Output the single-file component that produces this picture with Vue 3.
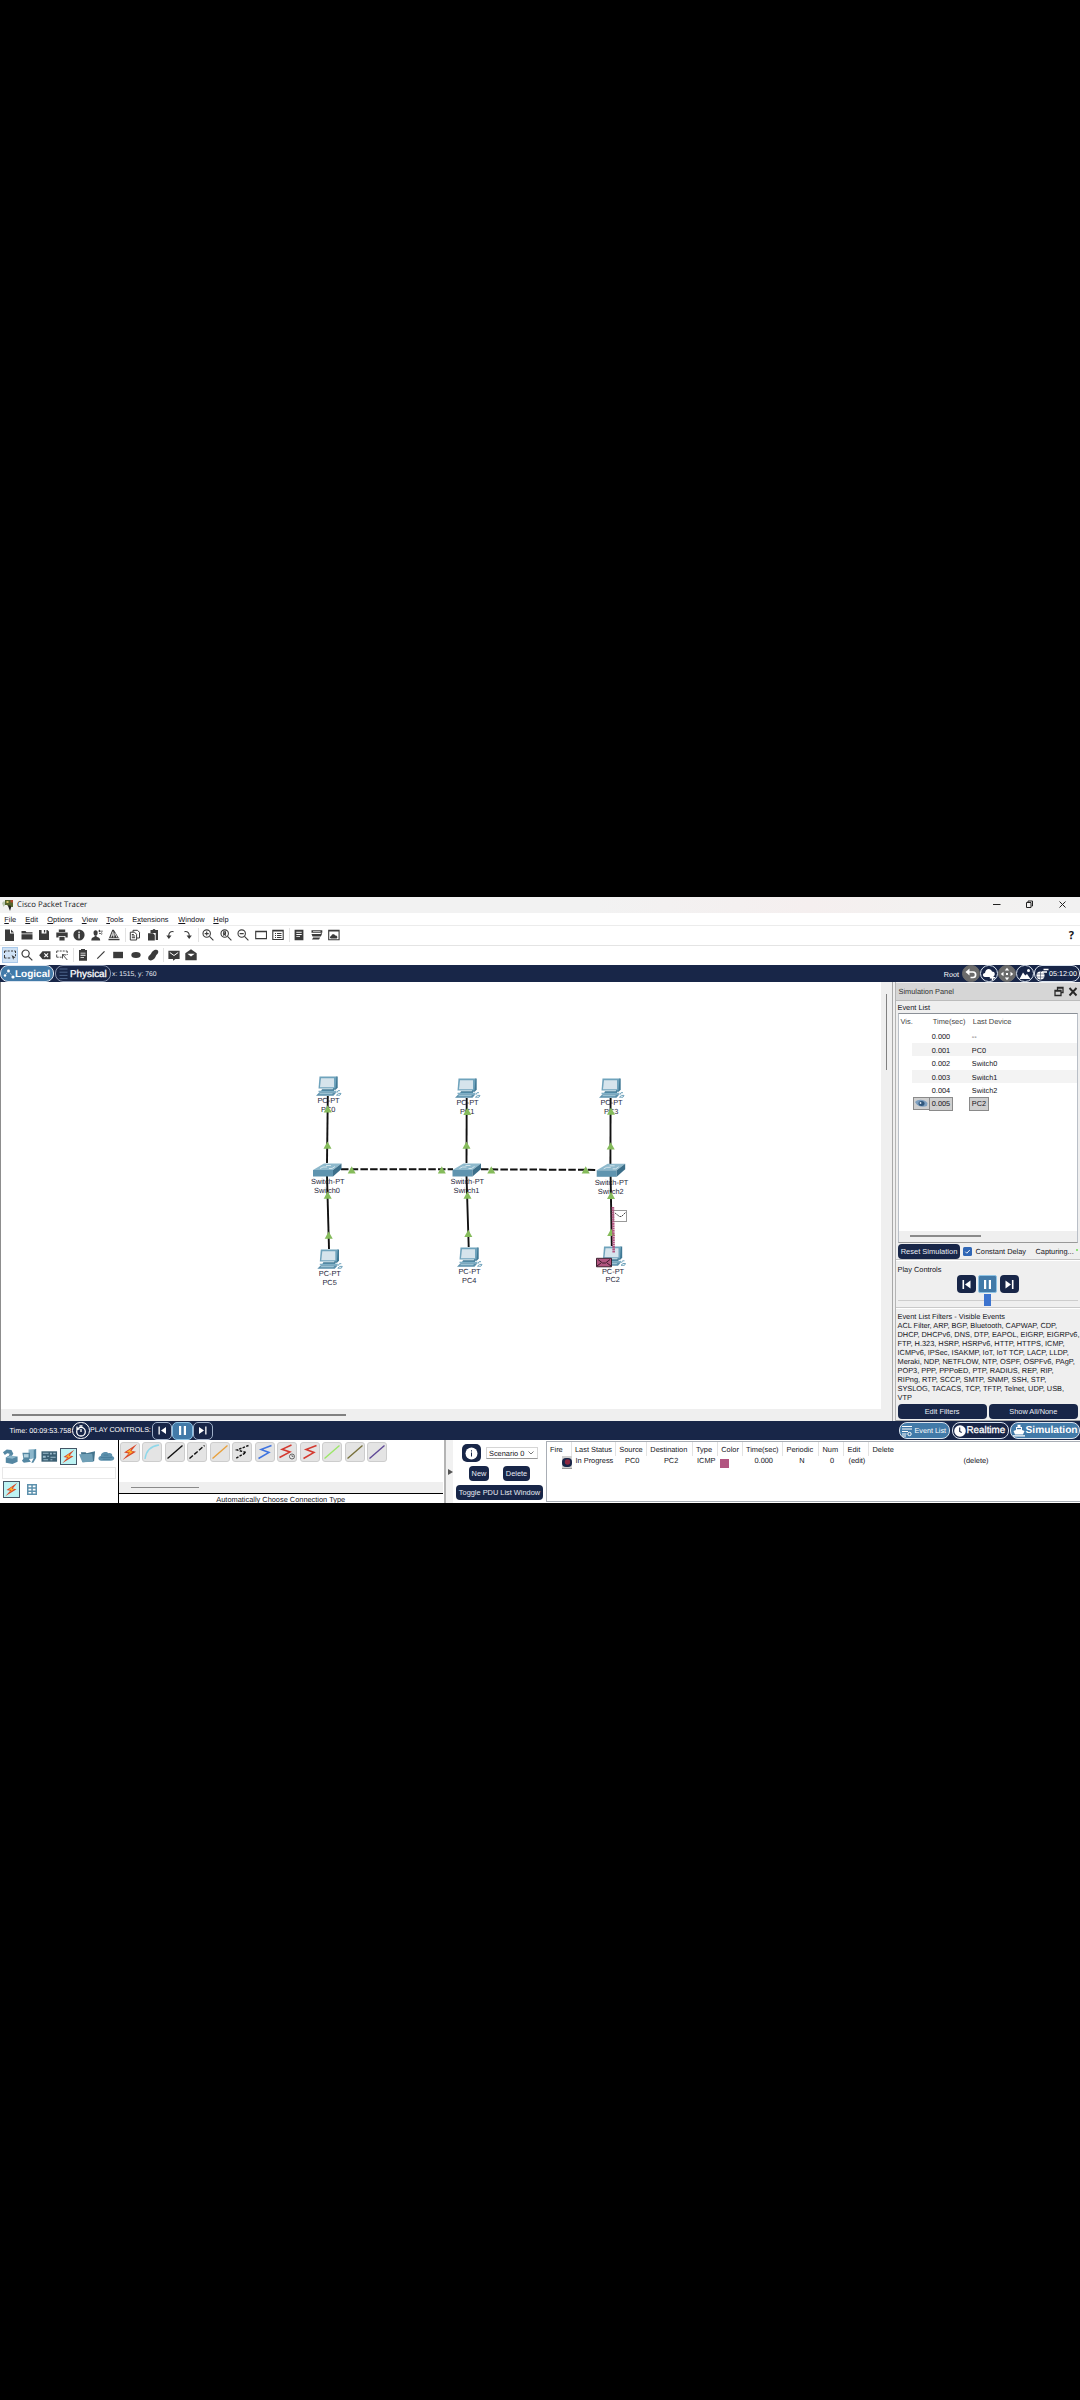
<script setup>
const menus = [
  ['File', 21], ['Edit', 22], ['Options', 34.5], ['View', 24.5], ['Tools', 26],
  ['Extensions', 46], ['Window', 35], ['Help', 30],
]

const icons = {
  file: '<path d="M2 0.5h5v4h4v7.5H2z M8 0.5l3 3H8z"/>',
  folder: '<path d="M0.5 2h4l1 1.3h6V4.6H0.5z M0.5 5.2h11v5.3H0.5z"/>',
  save: '<path fill-rule="evenodd" d="M1 1h8.5L11 2.6V11H1z M3.6 1v3.6h4.8V1H7.2v2.4H5.9V1z"/>',
  print: '<path fill-rule="evenodd" d="M2.8 0.5h6.4v2.4H2.8z M0.3 3.5h11.4v5H9.4V7H2.6v1.5H0.3z M3.4 7.8h5.2v3.7H3.4z"/>',
  info: '<circle cx="6" cy="6" r="5.6"/><path fill="#fff" d="M5.4 2.6h1.3v1.3H5.4z M5.4 4.8h1.3v4.6H5.4z"/>',
  user: '<ellipse cx="4.6" cy="4" rx="2.1" ry="2.700"/><path d="M0.3 11.500c0-2.700 1.500-3 3.300-3.700V6.500h2v1.300c1.800.5 3.600.9 3.600 3.700z M7.500 1.700h4.300v.8H7.500z M8 4h3.800v.8H8z M9 .6v3L7.200 2.100z M10.300 2.900v3l1.600-1.500z"/>',
  pyramid: '<path d="M4.300 0.800h1.500L10.800 9H1z M0.500 9.800h11v1.500H0.500z"/><path fill="none" stroke="#fff" stroke-width=".8" d="M5 2.500L3 8.500 M5.800 3.500v5 M7 4.200l2 4.300 M3.500 6h3"/>',
  copy: '<g fill="none" stroke="#3b3b3b" stroke-width="1"><path d="M4 3V1.300h4.500l2 2V9H8"/><path d="M1.300 3.200h4.200L7.600 5.300V11H1.300z M2.800 5.500h2 M2.800 7h3.300 M2.800 8.700h3.300"/></g>',
  paste: '<path d="M3.500 1h2L6.500 0h1l1 1h2.500v10H8.700V4H3.500z M1 4.200h5l1.800 1.900v5.400H1z"/>',
  undo: '<path fill="none" stroke="#3b3b3b" stroke-width="1.100" d="M9.500 2.600c-3.500-.4-5 1.600-4.700 4.500"/><path d="M2.300 6.400h5.200L4.900 10z"/>',
  redo: '<path fill="none" stroke="#3b3b3b" stroke-width="1.100" d="M2.500 2.600c3.500-.4 5 1.600 4.700 4.500"/><path d="M4.600 6.400h5.200L7.200 10z"/>',
  zin: '<g fill="none" stroke="#3b3b3b" stroke-width="1.100"><circle cx="4.700" cy="4.600" r="3.700"/><path d="M7.500 7.400l3.900 3.900 M2.700 4.600h4 M4.700 2.600v4"/></g>',
  zreset: '<g fill="none" stroke="#3b3b3b" stroke-width="1.100"><circle cx="4.700" cy="4.600" r="3.700"/><path d="M7.500 7.400l3.900 3.900 M3.700 6.800V2.900h1.800v1.800H4L6 6.600"/></g>',
  zout: '<g fill="none" stroke="#3b3b3b" stroke-width="1.100"><circle cx="4.700" cy="4.600" r="3.700"/><path d="M7.500 7.400l3.900 3.900 M2.700 4.600h4"/></g>',
  rect: '<path fill="none" stroke="#3b3b3b" stroke-width="1.100" d="M0.700 2.300h10.800v7.300H0.700z M0.700 2.800h10.800"/>',
  view: '<path fill="none" stroke="#3b3b3b" stroke-width="1.100" d="M0.800 1.300h10.400v9.200H0.800z M0.800 2h10.400 M3 4.500h1 M5 4.500h4.500 M3 6.500h1 M5 6.500h4.500 M3 8.500h1 M5 8.500h4.500"/>',
  doc: '<path fill-rule="evenodd" d="M1.600 0.700h8.800v10.600H1.600z M3.300 2.800v.9h5.400v-.9z M3.300 5v.9h5.400V5z M3.300 7.200v.9H7v-.9z"/>',
  stack: '<path d="M0.500 1.200h10.800v2.600H0.500z M0.500 5h8.800l1.500-1.500v2l-1 2H1.500z M2.200 8.400h7L8 10.600H1z"/><path fill="#fff" d="M2 2h7.500v.6H2z"/>',
  cloudwin: '<path fill="none" stroke="#3b3b3b" stroke-width="1.100" d="M0.700 1.200h10.400v9.600H0.700z M0.700 2h10.400"/><path d="M3 9.600c-1.500-.3-1.500-2.300.2-2.500.3-2.200 3.200-2.400 4-.6 2.500-.2 2.900 2.800.9 3.100z"/>',
  select: '<path fill="none" stroke="#3b3b3b" stroke-width="1" d="M0.500 4V2h2 M3.700 2h2 M7 2h2 M10.200 2h1.300v2 M0.500 6v3h2 M3.700 9h2.500 M11.500 5.200v2"/><path d="M7.600 6l4 2.500-1.700.5-.7 1.800z"/>',
  lasso: '<path fill="none" stroke="#3b3b3b" stroke-width=".9" d="M0.700 4V2h2 M3.700 2h2 M6.700 2h2 M9.700 2h1.500v2 M0.700 5.500v2.700h2 M3.700 8.200h2 M11.200 5v1"/><path fill="none" stroke="#3b3b3b" stroke-width=".9" d="M6.500 5.500l4.800 5.500 M6.500 5.500v4 M6.500 5.500l3.700.5"/>',
  mag: '<g fill="none" stroke="#3b3b3b" stroke-width="1.200"><circle cx="4.600" cy="4.600" r="3.600"/><path d="M7.300 7.300l4 4"/></g>',
  del: '<path d="M3.500 2.200h8v8h-8L0.200 6.200z"/><path fill="none" stroke="#fff" stroke-width="1.100" d="M5.300 4.300l3.800 3.800 M9.100 4.300L5.300 8.100"/>',
  note: '<path fill-rule="evenodd" d="M2 1h2V0h4v1h2v10.700H2z M3.500 3.700v.9h5v-.9z M3.500 5.800v.9h5v-.9z M3.500 7.900v.9H7v-.9z"/>',
  line: '<path fill="none" stroke="#3b3b3b" stroke-width="1.200" d="M2.300 9.600L9.500 2.400"/>',
  frect: '<path d="M1.200 2.800h9.800v6.400H1.200z"/>',
  ellipse: '<ellipse cx="6" cy="6" rx="4.700" ry="2.900"/>',
  blob: '<path d="M7.500 1C10 0 11.800 1.300 11.200 3.500c-.4 1.600-1.500 1.800-2.100 3-.9 2.300-2.300 4.500-5.100 4.900C1.500 11.700.5 9.500 1.500 7.500 2.200 6 3.200 6.200 4 4.700 4.800 3 5.800 1.700 7.500 1z"/>',
  mail: '<path d="M0.400 1.800h11.200v8.200H7.500L5 11.800V10H0.400z"/><path fill="none" stroke="#fff" stroke-width="1" d="M1.800 3.500L6 6.500l4.200-3"/>',
  mailopen: '<path d="M6 0.300l5.700 4v7H0.300v-7z"/><path fill="#fff" d="M2.300 4.700h7.400L6 7.600z"/>',
}
const bar1 = [
  ['file', 'folder', 'save', 'print', 'info', 'user', 'pyramid'],
  ['copy', 'paste', 'undo', 'redo'],
  ['zin', 'zreset', 'zout', 'rect', 'view'],
  ['doc', 'stack', 'cloudwin'],
]
const bar2 = [
  ['select', 'mag', 'del', 'lasso'],
  ['note', 'line', 'frect', 'ellipse', 'blob'],
  ['mail', 'mailopen'],
]

const pcs = [
  { n: 'PC0', x: 316, y: 1075.7 }, { n: 'PC1', x: 455, y: 1077.7 }, { n: 'PC3', x: 599, y: 1077.7 },
  { n: 'PC5', x: 317.3, y: 1248.7 }, { n: 'PC4', x: 457, y: 1246.7 }, { n: 'PC2', x: 600.5, y: 1245.8 },
]
const switches = [
  { n: 'Switch0', x: 313, y: 1163 }, { n: 'Switch1', x: 452.5, y: 1163 }, { n: 'Switch2', x: 596.7, y: 1163.3 },
]
const links = [
  [327.8, 1096, 327, 1163], [327, 1176, 329, 1249], [466.7, 1098, 466.5, 1163],
  [466.5, 1176, 468.7, 1247], [610.6, 1098, 610.4, 1164], [610.6, 1176, 611.8, 1246],
]
const lights = [
  [327.7, 1109], [327.5, 1145.3], [351.7, 1170], [441.8, 1170], [327.7, 1195.3], [328.7, 1235.3],
  [467.3, 1111.5], [466.5, 1145.3], [467.5, 1195.3], [468.3, 1233.5],
  [491.3, 1170], [585.7, 1170], [611, 1111.3], [610.7, 1146], [611, 1195.5], [611.2, 1232.5],
]

const events = [
  ['0.000', '--'], ['0.001', 'PC0'], ['0.002', 'Switch0'],
  ['0.003', 'Switch1'], ['0.004', 'Switch2'], ['0.005', 'PC2'],
]
const filters = [
  'ACL Filter, ARP, BGP, Bluetooth, CAPWAP, CDP,',
  'DHCP, DHCPv6, DNS, DTP, EAPOL, EIGRP, EIGRPv6,',
  'FTP, H.323, HSRP, HSRPv6, HTTP, HTTPS, ICMP,',
  'ICMPv6, IPSec, ISAKMP, IoT, IoT TCP, LACP, LLDP,',
  'Meraki, NDP, NETFLOW, NTP, OSPF, OSPFv6, PAgP,',
  'POP3, PPP, PPPoED, PTP, RADIUS, REP, RIP,',
  'RIPng, RTP, SCCP, SMTP, SNMP, SSH, STP,',
  'SYSLOG, TACACS, TCP, TFTP, Telnet, UDP, USB,',
  'VTP',
]

const bolt = '<path fill="#d9482b" d="M16 1L3 9.500l4.500 1L1.500 17 15 8.800l-4.500-1z"/><path fill="#ffb52e" d="M10.500 5.500L5.500 9l3.500.6L6.500 12.500l5.700-3.800-3-.6z"/>'
const cables = [
  bolt,
  '<path fill="none" stroke="#8fd8ea" stroke-width="1.400" d="M2 16C3 8 8 3 16 2"/>',
  '<path stroke="#111" stroke-width="1.400" d="M1.500 15.500L16.500 2.500"/>',
  '<path stroke="#111" stroke-width="1.400" stroke-dasharray="4.500 1.800" d="M1.500 15.500L16.500 2.500"/>',
  '<path stroke="#e8a03c" stroke-width="1.400" d="M1.500 15.500L16.500 2.500"/>',
  '<path fill="none" stroke="#111" stroke-width="1.400" stroke-dasharray="2.500 1.300" d="M15.500 2.500L4 7l9 2.500L2.500 15.500"/>',
  '<path fill="none" stroke="#3f74e0" stroke-width="1.500" d="M15.500 2.500L5 6.500l8 3L2.500 15.500"/>',
  '<path fill="none" stroke="#d33a30" stroke-width="1.500" d="M13.500 2L4 6.300l8 2.700L1.500 14.500"/><circle cx="14" cy="13.500" r="2.500" fill="#eee" stroke="#444" stroke-width=".8"/><path fill="none" stroke="#444" stroke-width=".7" d="M14 12v1.500h1.500"/>',
  '<path fill="none" stroke="#d33a30" stroke-width="1.500" d="M15.500 2.500L5 6.500l8 3L2.500 15.500"/>',
  '<path stroke="#9be667" stroke-width="1.400" d="M1.500 15.500L16.500 2.500"/>',
  '<path stroke="#77703a" stroke-width="1.400" d="M1.500 15.500L16.500 2.500"/>',
  '<path stroke="#5f4896" stroke-width="1.400" d="M1.500 15.500L16.500 2.500"/>',
]
const categories = [
  '<path fill="#5487a2" d="M1 4.500L5 1.500l5 .5 2 4-2.500 3.500L16.500 9v5.500L11 17l-7-1.500V10l3.500-2 .5-2-2.500-.5-2.500 2z"/><path fill="#8db7cb" d="M4 10l5-2 7 1-5 2.500z"/>',
  '<path fill="#8db7cb" d="M8 1.500l8-.5v9l-6 2-2-2z"/><path fill="#5487a2" d="M1.500 5h8v6l-1 1 2 2.500-7.500 1L1 13.500l1.500-2z M13.500 2.500L16 1v9.500l-3 5h-2l2.500-5z"/><path fill="#b5d2de" d="M3 6.500h5v3.500H3z"/>',
  '<path fill="#3b5f73" d="M.5 3.500h16.500v11H.5z"/><path fill="#9dbccb" d="M2 5h6v1H2z M9.500 5h2v2h-2z M13 5h2.500v1.500H13z M2 8.300h3v2H2z M6.500 8.300h2v1h-2z M10 9.300h5.500v1H10z M2.500 12h5v1h-5z M10 12h2v1h-2z"/>',
  bolt,
  '<path fill="#43748d" d="M2 4.500h5l1 1 9-2-1 10.500-12 1z"/><path fill="#6f9fb6" d="M0 6.500L14 6l1 8.500L3.500 15z"/>',
  '<path fill="#5d91ad" d="M3.500 13.500C-.5 13.500-.5 9 3 8.500 3 4.500 9 3 11 5.500c3.500-.5 4.500 1.500 4 3 3.500 1 2.500 5-1.500 5z"/><path fill="none" stroke="#3f7491" stroke-width=".7" d="M3 10h12 M5 12h8 M6 7.500h5"/>',
]
const cols = [
  ['Fire', 25], ['Last Status', 44.3], ['Source', 31], ['Destination', 45.7], ['Type', 25.3], ['Color', 24.7],
  ['Time(sec)', 40.5], ['Periodic', 36], ['Num', 25], ['Edit', 25], ['Delete', 40],
]
</script>

<template>
  <div class="screen">
    <div class="window">
      <header class="titlebar">
        <svg class="logo" width="12" height="13" viewBox="0 0 12 13"><path fill="#55652c" d="M3 1h8v7H7L5 6H3z" /><path fill="#b8c7b0" d="M0 4l2-2 1 1v3l-1.500 2z" /><path fill="#b0482e" d="M8.500 1h2.500v2.500H8.500z" /><path fill="#d9c56c" d="M4.500 2h2v2h-2z" /><path fill="#222" d="M6 6.500h2.500L9.200 8 8 12 6.800 9z" /></svg>
        <span class="app-name">Cisco Packet Tracer</span>
        <svg width="90" height="16" viewBox="990 897 90 16" fill="none" stroke="#222" stroke-width="1"><path d="M993 904.500h7.500" /><path d="M1026.500 902.500h4.500v5h-4.500z M1028 902v-1h4.500v5H1031.500" /><path d="M1059.500 901.500l6 6 M1065.500 901.500l-6 6" /></svg>
      </header>
      <nav class="menubar">
        <span v-for="m in menus" :key="m[0]" :style="{ width: m[1] + 'px' }"><template v-if="m[0] === 'Extensions'">E<u>x</u>tensions</template><template v-else><u>{{ m[0][0] }}</u>{{ m[0].slice(1) }}</template></span>
      </nav>
      <div class="tools one">
        <div v-for="(g, i) in bar1" :key="i" class="group">
          <span v-for="k in g" :key="k" class="cell"><svg width="12" height="12" viewBox="0 0 12 12" fill="#3b3b3b" v-html="icons[k]"></svg></span>
        </div>
        <b class="help">?</b>
      </div>
      <div class="tools two">
        <div v-for="(g, i) in bar2" :key="i" class="group">
          <span v-for="k in g" :key="k" class="cell" :class="{ on: k === 'select' }"><svg width="12" height="12" viewBox="0 0 12 12" fill="#3b3b3b" v-html="icons[k]"></svg></span>
        </div>
      </div>
      <div class="navbar">
        <div class="pill logical"><svg width="12" height="12" viewBox="0 0 12 12" fill="#fff"><circle cx="2" cy="7.500" r="1.200" /><circle cx="5.500" cy="3" r="1.400" /><circle cx="10" cy="9" r="1.600" /><path fill="none" stroke="#fff" stroke-width=".7" stroke-dasharray="1 1" d="M2 7.500l3.500-4.500L10 9" /></svg>Logical</div>
        <div class="pill physical"><svg width="9" height="12" viewBox="0 0 9 12" fill="none" stroke="#4d658c" stroke-width="1"><path d="M.5 1h8M.5 4.200h8M.5 7.400h8M.5 10.600h8" /></svg>Physical</div>
        <span class="coords">x: 1515, y: 760</span>
        <span class="root">Root</span>
        <div class="rounds">
          <i class="rb grey"><svg width="14" height="14" viewBox="0 0 14 14"><path fill="none" stroke="#fff" stroke-width="1.700" d="M3 5h6c3.500 0 3.500 5.500 0 5.500H6.500" /><path fill="#fff" d="M1.500 5L5.500 1.500v7z" /></svg></i>
          <i class="rb"><svg width="14" height="14" viewBox="0 0 14 14"><path fill="#fff" d="M3 10C0 9.500.5 6 3 6c.5-5 6-5 7-1.500 3 0 3.500 3 2 4.500l-1 1z" /><path stroke="#fff" stroke-width="1.400" d="M10.500 8v5.500M7.800 10.700h5.400" /></svg></i>
          <i class="rb grey"><svg width="14" height="14" viewBox="0 0 14 14" fill="#fff"><path d="M7 .8L9.200 3.500H4.800zM7 13.200l2.200-2.700H4.800zM.8 7l2.700-2.200v4.400zM13.200 7l-2.700-2.200v4.400zM6 6h2v2H6z" /></svg></i>
          <i class="rb"><svg width="14" height="14" viewBox="0 0 14 14" fill="#fff"><path d="M1.500 12L5 5.500l2.300 3L9 7l3.500 5z" /><circle cx="10.500" cy="3.500" r="1.500" /></svg></i>
        </div>
        <div class="pill clock"><svg width="14" height="14" viewBox="0 0 14 14"><circle cx="5.500" cy="8.500" r="4" fill="#fff" /><path fill="none" stroke="#182648" stroke-width=".5" d="M1.500 7h8M1.500 10h8M5.500 4.500v8" /><path stroke="#fff" stroke-width="1.300" d="M8.500 2.500h5M7 5h5" /></svg>05:12:00</div>
      </div>

      <main class="work">
        <section class="canvas">
          <svg class="topology" width="881" height="427" viewBox="0 982 881 427">
            <defs>
              <g id="pc">
                <path fill="#3f7894" d="M20 .8h1.700V12l-2 2h-3z" />
                <path fill="#6fa3bc" d="M3.500 .8h17l-1 12h-17z" />
                <path fill="#d6e4ec" d="M5 2.500h13v9H4z" />
                <path fill="#3f7894" d="M6 13.500h12v2H5z" />
                <path fill="#7eafc6" d="M2.500 15h18v1.500H2.500z" />
                <path fill="#5a8fab" d="M0 20l3.500-3.500h17L17.500 20z" />
                <path fill="#9bc2d3" d="M4 17.300h13l-1 1.200H3z" />
                <path fill="none" stroke="#6fa3bc" stroke-width="1" d="M21 17l1-2h2M20.500 19.500l2-1.800h2.500l-1 1.800z" />
              </g>
              <g id="sw">
                <path fill="#8eb9cc" d="M0 7L11 .5h17.500L20 7z" />
                <path fill="#5f94af" d="M0 7h20v6.500H0z" />
                <path fill="#3c6f8a" d="M20 7l8.500-6.500V6L20 13.500z" />
                <path fill="none" stroke="#e3eff4" stroke-width=".8" d="M7 5.500l3-1.500h4M13 2.500h5M16 5.500h3l3-2" />
              </g>
            </defs>
            <g class="label">
              <template v-for="p in pcs" :key="p.n">
                <text :x="p.x + 12.500" :y="p.y + 27.700">PC-PT</text><text :x="p.x + 12.300" :y="p.y + 36.600">{{ p.n }}</text>
              </template>
              <template v-for="s in switches" :key="s.n">
                <text :x="s.x + 14.800" :y="s.y + 21.400">Switch-PT</text><text :x="s.x + 14" :y="s.y + 30.400">{{ s.n }}</text>
              </template>
            </g>
            <line v-for="(l, i) in links" :key="i" :x1="l[0]" :y1="l[1]" :x2="l[2]" :y2="l[3]" stroke="#111" stroke-width="1.900" />
            <path stroke="#111" stroke-width="2" stroke-dasharray="7.500 2.200" d="M341 1169.300H453M481 1169.300l116 .6" />
            <use v-for="p in pcs" :key="p.n" href="#pc" :x="p.x" :y="p.y" />
            <use v-for="s in switches" :key="s.n" href="#sw" :x="s.x" :y="s.y" />
            <path v-for="(t, i) in lights" :key="i" fill="#85bb5b" :d="`M${t[0] - 4} ${t[1] + 3.5}L${t[0]} ${t[1] - 3.8}L${t[0] + 4} ${t[1] + 3.5}z`" />
            <path fill="#fff" stroke="#333" stroke-width="1" stroke-dasharray="1 1" d="M613.500 1210.500h13v11h-13z" />
            <path fill="none" stroke="#333" stroke-width=".9" stroke-dasharray="2 .8" d="M615 1213l4.500 3.500h2l4.500-4.500" />
            <path stroke="#b25580" stroke-width="2.600" stroke-dasharray="1.800 .5" d="M612.900 1207l.8 46" />
            <path fill="#b25580" stroke="#301522" stroke-width=".9" d="M596.500 1258.300h15v8.500h-15z" />
            <path fill="none" stroke="#301522" stroke-width=".9" d="M598 1259.500l4.500 3.500h3l4.500-3.500M597 1266l4-3M611 1266l-4-3" />
          </svg>
          <div class="vscroll"><i></i></div>
          <div class="hscroll"><i></i></div>
        </section>

        <aside class="sim">
          <div class="sim-head"><span>Simulation Panel</span><svg width="24" height="12" viewBox="0 0 24 12" fill="none" stroke="#2a2a2a"><path stroke-width="1.300" d="M1 4.500h6v5H1zM3.500 4V1.500H9v5H7.500M1 5h6M3.500 2H9" /><path stroke-width="1.900" d="M15.500 2l7 7.500M22.500 2l-7 7.500" /></svg></div>
          <div class="sim-label">Event List</div>
          <div class="events">
            <div class="ev head"><span>Vis.</span><span>Time(sec)</span><span>Last Device</span></div>
            <div v-for="(e, i) in events" :key="i" class="ev" :class="{ alt: i % 2, cur: i === 5 }">
              <span class="eye"><svg v-if="i === 5" width="13" height="9" viewBox="0 0 13 9"><path fill="#7d9fc0" d="M0 3C3 0 9 0 12.500 4l-.5 3C8 8 3 8.500 0 3z" /><ellipse cx="6.500" cy="4.500" rx="3" ry="2.500" fill="#31577c" /><circle cx="5.500" cy="4" r=".9" fill="#dfeaf3" /></svg></span>
              <span><em>{{ e[0] }}</em></span><span><em>{{ e[1] }}</em></span>
            </div>
            <div class="ev-scroll"><i></i></div>
          </div>
          <div class="reset">
            <button class="btn rs">Reset Simulation</button>
            <i class="check"><svg width="9" height="9" viewBox="0 0 9 9"><path fill="none" stroke="#fff" stroke-width=".9" d="M2.300 4.700l1.500 1.500L6.800 3" /></svg></i>
            <span class="cd">Constant Delay</span><span>Capturing...</span><i class="dot"></i>
          </div>
          <div class="play">
            <div>Play Controls</div>
            <div class="pbtns">
              <i><svg width="11" height="11" viewBox="0 0 11 11" fill="#fff"><path d="M1.500 1h1.600v9H1.500zM9.500 1.500v8l-5.500-4z" /></svg></i>
              <i class="act"><svg width="11" height="11" viewBox="0 0 11 11" fill="#fff"><path d="M2 1h2.200v9H2zM6.800 1H9v9H6.800z" /></svg></i>
              <i><svg width="11" height="11" viewBox="0 0 11 11" fill="#fff"><path d="M7.900 1h1.600v9H7.900zM1.500 1.500v8L7 5.500z" /></svg></i>
            </div>
            <div class="slider"><i></i></div>
          </div>
          <div class="filters">
            <div class="ft">Event List Filters - Visible Events</div>
            <div v-for="f in filters" :key="f" class="fl">{{ f }}</div>
            <div class="fb"><button class="btn">Edit Filters</button><button class="btn">Show All/None</button></div>
          </div>
        </aside>
      </main>

      <div class="timebar">
        <span class="time">Time: 00:09:53.758</span>
        <i class="timer"><svg width="12" height="12" viewBox="0 0 12 12" fill="none" stroke="#fff"><circle cx="6" cy="6.700" r="4.300" stroke-width="1.300" /><path stroke-width="1.300" d="M4.500 1h3M6 4v3M2 1.500v2.500h2.500" /></svg></i>
        <span class="pc">PLAY CONTROLS:</span>
        <div class="tb">
          <i><svg width="11" height="11" viewBox="0 0 11 11" fill="#fff"><path d="M1.500 1.500h1.300v8H1.500zM9 2v7L4 5.500z" /></svg></i>
          <i class="act"><svg width="11" height="11" viewBox="0 0 11 11" fill="#fff"><path d="M2 1h2.200v9H2zM6.800 1H9v9H6.800z" /></svg></i>
          <i><svg width="11" height="11" viewBox="0 0 11 11" fill="#fff"><path d="M8.200 1.500h1.300v8H8.200zM2 2v7l5-3.500z" /></svg></i>
        </div>
        <div class="modes">
          <div class="pill evl"><svg width="11" height="12" viewBox="0 0 11 12" fill="none" stroke="#fff" stroke-width="1"><path d="M0 1.500h10M0 4h10M0 6.500h6M0 9h4.500M0 11h4" /><circle cx="7.500" cy="9" r="1.700" /></svg>Event List</div>
          <div class="pill rt"><svg width="12" height="12" viewBox="0 0 12 12"><circle cx="6" cy="6" r="5.800" fill="#fff" /><path fill="none" stroke="#182648" stroke-width="1.100" d="M5.700 2.500v4l2 1" /></svg>Realtime</div>
          <div class="pill sm"><svg width="12" height="13" viewBox="0 0 12 13" fill="#fff"><path d="M3 6V3h1.500V.8h3V3H9v3l2.500 1-1.500 3.500H2L.5 7zM0 11.300h12v1.200H0z" /><path fill="#427aa8" d="M4 4h4v1.200H4z" /></svg>Simulation</div>
        </div>
      </div>

      <footer class="bottom">
        <div class="palette">
          <div class="cats"><svg v-for="(c, i) in categories" :key="i" width="17" height="17" viewBox="0 0 18 18" :class="{ sel: i === 3 }" v-html="c"></svg></div>
          <div class="subtitle"></div>
          <div class="subs"><svg class="sel" width="17" height="17" viewBox="0 0 18 18" v-html="bolt"></svg><svg width="10" height="11" viewBox="0 0 10 11"><path fill="#5d91ad" fill-rule="evenodd" d="M0 0h10v11H0zM1.500 1.500v1.800h2.800V1.500zM5.800 1.500v1.800h2.700V1.500zM1.500 4.700v1.800h2.800V4.700zM5.800 4.700v1.800h2.700V4.700zM1.500 7.900v1.700h2.800V7.900zM5.800 7.900v1.700h2.700V7.900z" /></svg></div>
        </div>
        <div class="conns">
          <div class="cable-row"><i v-for="(c, i) in cables" :key="i"><svg width="18" height="18" viewBox="0 0 18 18" v-html="c"></svg></i></div>
          <div class="cscroll"><i></i></div>
          <div class="cname">Automatically Choose Connection Type</div>
        </div>
        <div class="splitter"><svg width="5" height="6" viewBox="0 0 5 6"><path fill="#555" d="M0 0l5 3-5 3z" /></svg></div>
        <div class="scenario">
          <div class="srow r1"><i class="inf"><svg width="13" height="13" viewBox="0 0 13 13"><circle cx="6.500" cy="6.500" r="6" fill="#fff" /><path fill="#182648" d="M6 3.300h1v1.200H6zM6 5.500h1v4H6z" /></svg></i><div class="combo">Scenario 0<svg width="6" height="4" viewBox="0 0 6 4"><path fill="none" stroke="#555" stroke-width=".8" d="M.5.500L3 3 5.500.500" /></svg></div></div>
          <div class="srow r2"><button class="btn new">New</button><button class="btn dl">Delete</button></div>
          <button class="btn tog">Toggle PDU List Window</button>
        </div>
        <div class="pdu">
          <div class="prow ph"><span v-for="c in cols" :key="c[0]" :style="{ width: c[1] + 'px' }">{{ c[0] }}</span></div>
          <div class="prow pr">
            <span class="fire"><i><svg width="10" height="9" viewBox="0 0 10 9"><rect width="10" height="9" rx="4" fill="#182648" /><circle cx="5.500" cy="4" r="2.700" fill="#8c2740" /></svg></i></span>
            <span class="st">In Progress</span><span class="c31">PC0</span><span class="c46">PC2</span><span class="ty">ICMP</span>
            <span class="co"><i></i></span><span class="c40">0.000</span><span class="c36">N</span><span class="c25">0</span><span class="ed">(edit)</span><span>(delete)</span>
          </div>
        </div>
      </footer>
    </div>
  </div>
</template>

<style>
body { margin: 0; background: #000; }
</style>

<style scoped>
.screen { width: 1080px; height: 2400px; background: #000; padding-top: 897px; box-sizing: border-box; overflow: hidden; }
.screen * { box-sizing: border-box; }
.window { width: 1080px; height: 607px; background: #fff; font-family: "Liberation Sans", Arial, sans-serif; font-size: 7.4px; line-height: 9px; color: #15151c; display: flex; flex-direction: column; text-rendering: geometricPrecision; white-space: nowrap; overflow: hidden; }
svg { display: block; flex: none; }
i { display: block; font-style: normal; flex: none; }
.titlebar { height: 16px; flex: none; background: linear-gradient(90deg, #f2f2f2 0, #f2f2f2 55%, #f5efef 75%, #f3f1f0 85%, #f1f1f1); display: flex; align-items: center; }
.logo { margin-left: 2px; }
.app-name { font-family: "Open Sans", "Noto Sans", sans-serif; font-size: 7.8px; margin: 1px 0 0 3px; flex: 1; }
.menubar { height: 13px; flex: none; padding-left: 4.3px; display: flex; align-items: center; border-bottom: 1px solid #ececec; }
.menubar u { text-underline-offset: 1px; text-decoration-thickness: 1px; }
.tools { height: 20px; flex: none; display: flex; align-items: center; border-bottom: 1px solid #e4e4e4; }
.tools.two { height: 19px; border-bottom: none; padding-bottom: 1.5px; }
.tools.one { padding-left: .5px; padding-bottom: .5px; }
.tools.two { padding-left: 1px; }
.group { display: flex; align-items: center; }
.group + .group { margin-left: 1.5px; border-left: 1px solid #e2e2e2; padding-left: .8px; height: 14px; }
.cell { width: 17.5px; height: 14px; display: flex; align-items: center; justify-content: center; }
.cell.on { width: 13.5px; margin: 0 2px; background: #cfe2f5; outline: .5px solid #a9c9ea; }
.help { margin-left: auto; margin-right: 6px; font-size: 11px; font-family: "Open Sans", sans-serif; }
.navbar, .timebar { background: #182648; color: #fff; flex: none; display: flex; align-items: center; }
.navbar { height: 17px; }
.pill { height: 17px; border: 1px solid #dbe4ef; border-radius: 8px; display: flex; align-items: center; flex: none; color: #fff; }
.logical { width: 54px; background: #427aa8; font-weight: bold; font-size: 10px; padding-left: 1.5px; gap: .5px; padding-top: 1px; }
.physical { width: 56px; margin-left: 1px; font-size: 9.9px; padding: 1px 0 0 3px; gap: 2px; border-color: #8b97b0; -webkit-text-stroke: .3px #fff; }
.coords { margin-left: 1px; font-size: 6.8px; flex: 1; color: #e4e8f0; padding-top: 1px; }
.root { font-size: 7.2px; margin-right: 3px; padding-top: 1px; }
.rounds { display: flex; }
.rb { width: 18px; height: 17px; border-radius: 9px; border: 1px solid #dbe4ef; display: flex; align-items: center; justify-content: center; }
.rb.grey { background: #6b6b6b; border-color: #6b6b6b; }
.clock { width: 46px; font-size: 7.2px; }
.work { height: 439px; flex: none; display: flex; background: #efefef; }
.canvas { width: 893px; height: 439px; border-left: 1px solid #8d8d8d; border-right: 1px solid #a8a8a8; display: grid; grid-template-columns: 880px 11px; grid-template-rows: 427px 12px; background: #efefef; }
.topology { background: #fff; margin-left: -1px; width: 881px; clip-path: inset(0 0 0 1px); }
.label { font-size: 7.4px; fill: #26263a; text-anchor: middle; }
.vscroll i { width: 1.5px; height: 76px; margin: 12px 0 0 4.5px; background: #808080; }
.hscroll i { height: 1.5px; width: 334px; margin: 5px 0 0 11px; background: #808080; }
.sim { width: 185px; margin-left: 2px; display: flex; flex-direction: column; border-left: 1px solid #b5b5b5; }
.sim-head { height: 18px; margin-top: 1px; background: #d6d6d6; border-bottom: 1px solid #bcbcbc; display: flex; align-items: center; justify-content: space-between; padding: 0 2px 0 2.5px; color: #333; flex: none; }
.sim-label { height: 12px; flex: none; padding: 2px 0 0 1.5px; }
.events { height: 230px; flex: none; margin: 0 2px 0 2px; background: #fff; border: 1px solid #b9bfc7; border-top-color: #8b9097; border-bottom-color: #999; display: flex; flex-direction: column; }
.ev { height: 13.5px; flex: none; display: grid; grid-template-columns: 32.3px 40px 1fr; align-items: center; }
.ev.head { height: 15px; color: #444; padding-left: 1.5px; }
.ev.alt { background: linear-gradient(90deg, #fff 13.5px, #f3f3f3 13.5px); }
.ev em { font-style: normal; padding: 2px 1.5px; border: 1px solid transparent; font-size: 7.3px; margin-left: -2px; display: inline-block; }
.ev.cur { background: #fff; }
.ev.cur em { background: #cfcfcf; border-color: #8a8a8a; padding: 1.5px 1.5px; }
.eye { display: flex; height: 13.5px; margin-left: 13.5px; align-items: center; justify-content: center; }
.cur .eye { background: #cfcfcf; border: 1px solid #8a8a8a; margin-right: 1.500px; }
.ev-scroll { margin-top: auto; height: 11px; background: #efefef; padding: 4px 0 0 11px; }
.ev-scroll i { width: 71px; height: 1.5px; background: #8a8a8a; }
.reset { height: 18px; flex: none; display: flex; align-items: center; padding-left: 2px; border-bottom: 1px solid #fff; box-shadow: 0 -1px #c4c4c4 inset; overflow: hidden; }
.btn { background: #182648; color: #e8ecf4; font: 7.4px/9px "Liberation Sans", Arial, sans-serif; border: 0; border-radius: 4px; padding: 0; height: 15px; text-align: center; white-space: nowrap; flex: none; }
.rs { width: 62px; font-size: 7.5px; }
.check { width: 9px; height: 9px; background: #2f66b5; border-radius: 1.5px; margin: 0 3.5px 0 3px; }
.cd { width: 60px; }
.dot { width: 2px; height: 2px; background: #8de27a; margin-left: 2px; margin-top: -4px; }
.play { height: 47px; flex: none; padding: 4px 2px 0 1.5px; border-bottom: 1px solid #c9c9c9; }
.pbtns { display: flex; justify-content: center; gap: 2.5px; margin-top: 1px; }
.pbtns i { width: 19px; height: 18px; background: #182648; border-radius: 4px; display: flex; align-items: center; justify-content: center; }
.pbtns .act { background: #427aa8; border: 1.5px solid #8fc3e4; border-radius: 2px; }
.slider { height: 12px; background: linear-gradient(#cdcdcd, #cdcdcd) 0 6px / 100% 1px no-repeat; margin-top: 1px; }
.slider i { width: 7px; height: 12px; background: #3d74cf; margin-left: 86.5px; }
.filters { flex: 1; min-height: 0; border-top: 1px solid #fff; padding: 2.5px 2px 0 1.5px; border-bottom: 1px solid #a5a5a5; }
.ft { height: 9.5px; }
.fl { height: 9.05px; line-height: 9.05px; font-size: 7.38px; }
.fb { display: flex; gap: 2px; margin-top: 1.5px; }
.fb .btn { width: 89.2px; }
.timebar { height: 19px; padding-left: 9.5px; }
.time { width: 62.5px; font-size: 7.2px; }
.timer { width: 18px; height: 17px; border: 1px solid #fff; border-radius: 9px; display: flex; align-items: center; justify-content: center; }
.pc { width: 62px; font-size: 7.1px; }
.tb { display: flex; flex: 1; }
.tb i { width: 20.3px; height: 18px; border: 1px solid #9fb0c8; border-radius: 5px; display: flex; align-items: center; justify-content: center; }
.tb .act { background: #427aa8; border-color: #8fc3e4; }
.modes { display: flex; }
.evl { width: 51px; background: #427aa8; padding-left: 2px; gap: 1.5px; font-size: 7.2px; margin-right: 2px; }
.rt { width: 57px; padding-left: 1px; gap: .5px; font-size: 9.8px; margin-right: 1px; -webkit-text-stroke: .3px #fff; }
.sm { width: 70px; background: #427aa8; padding-left: 2px; gap: .5px; font-size: 10.2px; font-weight: bold; }
.bottom { height: 64px; flex: none; display: flex; border-bottom: 1px solid #000; }
.palette { width: 119px; border-right: 1px solid #000; padding: 7.5px 2px 0; }
.cats { display: flex; gap: 2.3px; }
.cats svg, .subs .sel { flex: none; }
.sel { background: #bdf3f3; border: 1px solid #456; }
.subtitle { height: 12.5px; border: 1px solid #e8e8e8; margin-top: 2px; }
.subs { display: flex; align-items: center; gap: 6.5px; margin: 2px 0 0 1px; }
.conns { width: 325px; display: flex; flex-direction: column; padding-top: 2px; }
.cable-row { display: flex; gap: 2.6px; padding-left: 1px; height: 40px; flex: none; }
.cable-row i { width: 19.9px; height: 20px; background: #e4e4e4; border: 1px solid #cdcdcd; border-radius: 3px; }
.cscroll { height: 10.5px; flex: none; background: #efefef; padding: 4.5px 0 0 12px; width: 323.5px; }
.cscroll i { width: 68px; height: 1.5px; background: #8a8a8a; }
.cname { flex: 1; border-top: 1px solid #000; text-align: center; padding-top: 1px; width: 323.5px; }
.splitter { width: 9px; border-left: 2px solid #b4b4b4; background: #f1f1f1; padding: 29px 0 0 2px; }
.scenario { width: 93px; padding: 4px 0 0 3px; display: flex; flex-direction: column; }
.srow { display: flex; }
.r1 { height: 22px; padding-left: 6px; align-items: flex-start; }
.inf { width: 19px; height: 18px; border-radius: 5px; background: #182648; display: flex; align-items: center; justify-content: center; }
.combo { width: 52px; height: 12px; margin: 3px 0 0 5px; border: 1px solid #d5d5d5; border-bottom-color: #999; display: flex; align-items: center; justify-content: space-between; padding: 0 3px 0 2px; }
.r2 { height: 19px; padding-left: 13px; gap: 14px; }
.new { width: 20px; }
.dl { width: 27px; }
.tog { width: 87px; }
.pdu { flex: 1; border: 1px solid #a9aeb5; border-right: 0; margin: 1px 0; }
.prow { display: flex; }
.ph { height: 14px; align-items: center; }
.ph span { height: 14px; padding: 2.5px 0 0 3px; border-right: 1px solid #e3e3e3; flex: none; }
.ph span:last-child { border: 0; }
.pr { height: 14px; }
.pr span { flex: none; text-align: center; height: 10px; }
.pr .fire { width: 25px; display: flex; justify-content: flex-end; height: 14px; }
.fire i { width: 10px; height: 13px; background: #cfcfcf; padding-top: 2px; border-bottom: 1px solid #999; }
.pr .st { width: 44.3px; padding-left: 3.5px; text-align: left; }
.pr .c31 { width: 32px; }
.pr .c46 { width: 45.7px; }
.pr .ty { width: 24.3px; text-align: left; padding-left: 3px; }
.pr .co { width: 24.7px; }
.co i { width: 9px; height: 9px; margin: 2.5px 0 0 2px; background: #b25580; }
.pr .c40 { width: 41.5px; }
.pr .c36 { width: 35px; }
.pr .c25 { width: 25px; }
.pr .ed { width: 119px; text-align: left; padding-left: 4px; }
</style>
